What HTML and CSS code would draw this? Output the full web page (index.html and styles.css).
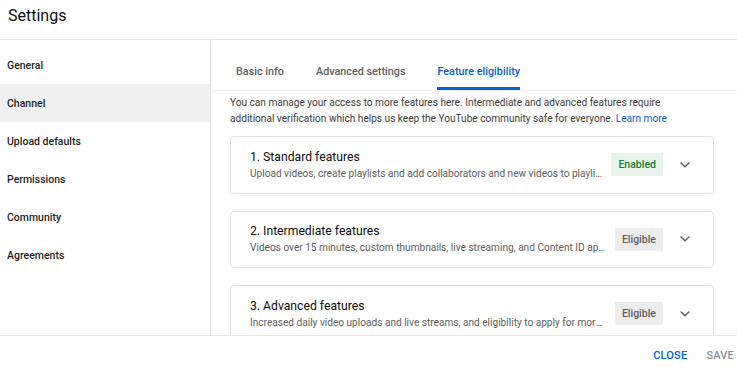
FILE: index.html
```
<!DOCTYPE html>
<html>
<head>
<meta charset="utf-8">
<link rel="stylesheet" href="styles.css">
</head>
<body>
<div class="dialog">
  <header class="header"><h1 class="title">Settings</h1></header>
  <div class="main">
    <nav class="sidebar">
      <div class="nav-item">General</div>
      <div class="nav-item active">Channel</div>
      <div class="nav-item">Upload defaults</div>
      <div class="nav-item">Permissions</div>
      <div class="nav-item">Community</div>
      <div class="nav-item">Agreements</div>
    </nav>
    <section class="panel">
      <div class="tabs">
        <div class="tab">Basic info</div>
        <div class="tab">Advanced settings</div>
        <div class="tab selected">Feature eligibility</div>
      </div>
      <div class="content">
        <p class="intro">You can manage your access to more features here. Intermediate and advanced features require additional verification which helps us keep the YouTube community safe for everyone. <a class="link">Learn more</a></p>
        <div class="card">
          <div class="card-text">
            <div class="card-title">1. Standard features</div>
            <div class="card-desc">Upload videos, create playlists and add collaborators and new videos to playlists, and more</div>
          </div>
          <span class="badge enabled">Enabled</span>
          <span class="chev"><svg width="24" height="24" viewBox="0 0 24 24"><path d="M7.6 9.4 12 13.8l4.4-4.4" fill="none" stroke="#606060" stroke-width="1.4"/></svg></span>
        </div>
        <div class="card">
          <div class="card-text">
            <div class="card-title">2. Intermediate features</div>
            <div class="card-desc">Videos over 15 minutes, custom thumbnails, live streaming, and Content ID appeals</div>
          </div>
          <span class="badge eligible">Eligible</span>
          <span class="chev"><svg width="24" height="24" viewBox="0 0 24 24"><path d="M7.6 9.4 12 13.8l4.4-4.4" fill="none" stroke="#606060" stroke-width="1.4"/></svg></span>
        </div>
        <div class="card">
          <div class="card-text">
            <div class="card-title">3. Advanced features</div>
            <div class="card-desc">Increased daily video uploads and live streams, and eligibility to apply for more features</div>
          </div>
          <span class="badge eligible">Eligible</span>
          <span class="chev"><svg width="24" height="24" viewBox="0 0 24 24"><path d="M7.6 9.4 12 13.8l4.4-4.4" fill="none" stroke="#606060" stroke-width="1.4"/></svg></span>
        </div>
      </div>
    </section>
  </div>
  <footer class="footer">
    <span class="btn close">Close</span>
    <span class="btn save">Save</span>
  </footer>
</div>
</body>
</html>
```
FILE: styles.css
```
* { box-sizing: border-box; }
html, body { margin: 0; padding: 0; background: #fff; }
body { font-family: Roboto, "Noto Sans", sans-serif; color: #0d0d0d; }
.dialog { width: 737px; height: 367px; display: flex; flex-direction: column; overflow: hidden; }
.header { height: 40px; border-bottom: 1px solid #e5e5e5; padding-left: 8px; display: flex; align-items: center; flex: none; }
.title { margin: 0; font-size: 16px; font-weight: 400; line-height: 20px; position: relative; top: -4px; color: #0d0d0d; }
.main { flex: 1; display: flex; min-height: 0; }
.sidebar { width: 211px; flex: none; border-right: 1px solid #e8e8e8; padding-top: 6px; }
.nav-item { height: 38px; display: flex; align-items: center; padding-left: 7px; font-size: 10.5px; font-weight: 500; color: #1f1f1f; }
.nav-item.active { background: #f0f0f0; }
.panel { flex: 1; display: flex; flex-direction: column; min-width: 0; }
.tabs { height: 50px; flex: none; display: flex; align-items: flex-end; padding-left: 9px; box-shadow: 0 1px 2px rgba(0,0,0,0.08); position: relative; z-index: 1; }
.tab { margin: 0 16px; height: 36px; display: flex; align-items: center; font-size: 10.8px; font-weight: 500; color: #606060; border-bottom: 3px solid transparent; padding-top: 2px; }
.tab.selected { color: #065fd4; border-bottom-color: #065fd4; }
.content { flex: 1; overflow: hidden; padding: 5px 23px 0 19px; }
.intro { margin: 0 0 9px; max-width: 458px; font-size: 10.1px; line-height: 16px; color: #3d3d3d; }
.link { color: #065fd4; }
.card { height: 57.5px; border: 1px solid #e2e2e2; border-radius: 4px; display: flex; align-items: center; padding: 0 16px 0 19px; margin-bottom: 17px; }
.card-text { flex: 1; min-width: 0; margin-right: 8px; padding-top: 1px; }
.card-title { font-size: 12.2px; line-height: 17px; color: #0d0d0d; }
.card-desc { font-size: 10.1px; line-height: 16px; color: #606060; white-space: nowrap; overflow: hidden; text-overflow: ellipsis; }
.badge { flex: none; height: 23px; display: flex; align-items: center; padding: 0 7px; font-size: 10.5px; font-weight: 500; }
.badge.enabled { background: #e6f4ea; color: #188038; }
.badge.eligible { background: #ececec; color: #606060; }
.chev { flex: none; width: 24px; height: 24px; margin-left: 10px; display: flex; }
.footer { height: 32px; flex: none; border-top: 1px solid #e5e5e5; display: flex; justify-content: flex-end; align-items: center; padding: 8px 3px 0 0; gap: 19px; }
.btn { font-size: 11px; font-weight: 500; text-transform: uppercase; letter-spacing: 0.2px; }
.btn.close { color: #065fd4; }
.btn.save { color: #909090; }
```
